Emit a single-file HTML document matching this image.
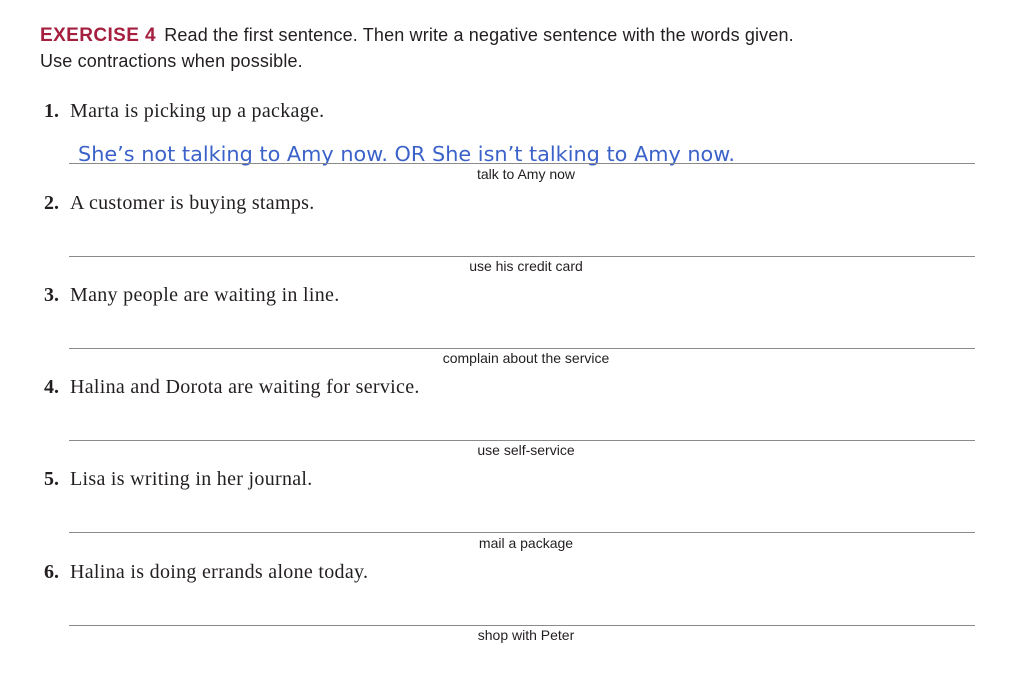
<!DOCTYPE html>
<html><head><style>
body{margin:0;width:1010px;height:676px;background:#fff;position:relative;overflow:hidden;font-family:"Liberation Sans",sans-serif;color:#231f20}
.a{position:absolute;white-space:nowrap}
.h{left:40px;top:25px;font-size:18px;letter-spacing:0.15px}
.h b{color:#a51f3f;font-size:19px;letter-spacing:0.4px;margin-right:-2px}
.h2{left:40px;top:51px;font-size:18px;letter-spacing:0.15px}
.q{left:44px;font-family:"Liberation Serif",serif;font-size:20px;letter-spacing:0.3px}
.q span{display:inline-block;width:26px;font-weight:bold;letter-spacing:0}
.l{left:69px;width:906px;height:0;border-top:1px solid #8a8a8a}
.c{left:326px;width:400px;text-align:center;font-size:14px}
</style></head><body>
<div class="a h"><b>EXERCISE 4</b>&nbsp; Read the first sentence. Then write a negative sentence with the words given.</div>
<div class="a h2">Use contractions when possible.</div>

<div class="a q" style="top:100px"><span>1.</span>Marta is picking up a package.</div>
<svg class="a" style="left:70px;top:138px" width="700" height="30"><text x="8" y="23" font-family="DejaVu Sans,sans-serif" font-size="20" fill="#3b62c9" textLength="657" lengthAdjust="spacingAndGlyphs">She’s not talking to Amy now. OR She isn’t talking to Amy now.</text></svg>
<div class="a l" style="top:163px"></div>
<div class="a c" style="top:166px">talk to Amy now</div>

<div class="a q" style="top:192px"><span>2.</span>A customer is buying stamps.</div>
<div class="a l" style="top:256px"></div>
<div class="a c" style="top:258px">use his credit card</div>

<div class="a q" style="top:284px"><span>3.</span>Many people are waiting in line.</div>
<div class="a l" style="top:348px"></div>
<div class="a c" style="top:350px">complain about the service</div>

<div class="a q" style="top:376px"><span>4.</span>Halina and Dorota are waiting for service.</div>
<div class="a l" style="top:440px"></div>
<div class="a c" style="top:442px">use self-service</div>

<div class="a q" style="top:468px"><span>5.</span>Lisa is writing in her journal.</div>
<div class="a l" style="top:532px"></div>
<div class="a c" style="top:535px">mail a package</div>

<div class="a q" style="top:561px"><span>6.</span>Halina is doing errands alone today.</div>
<div class="a l" style="top:625px"></div>
<div class="a c" style="top:627px">shop with Peter</div>
</body></html>
